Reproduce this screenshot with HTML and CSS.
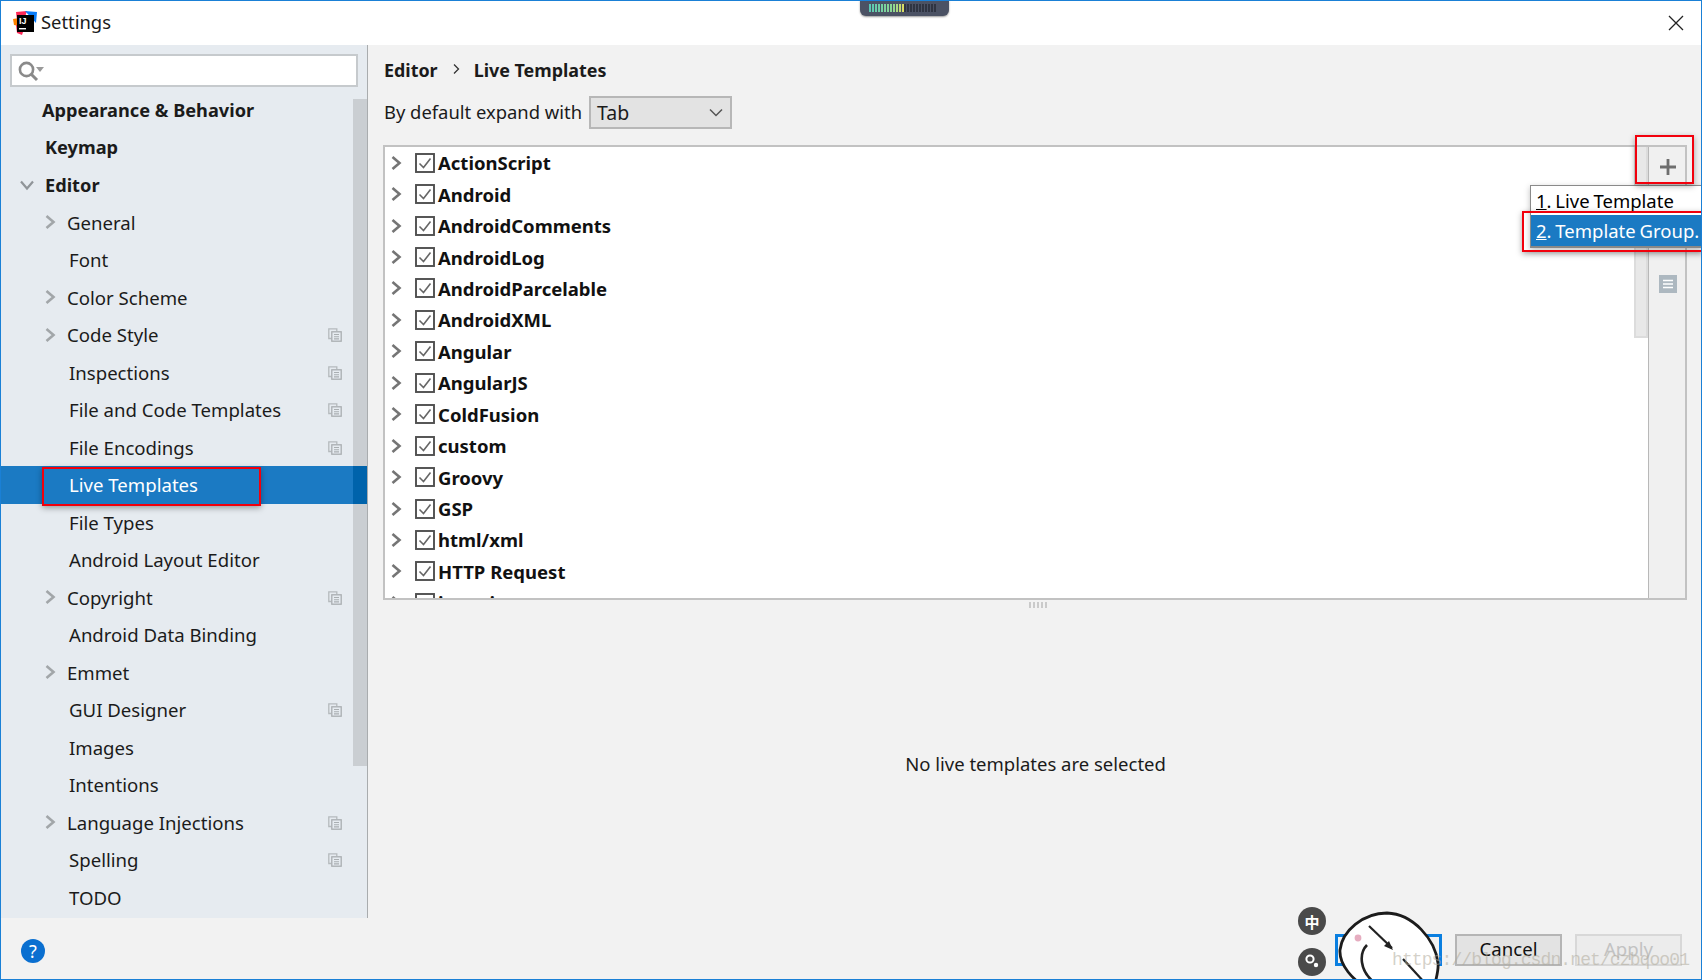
FILE: index.html
```html
<!DOCTYPE html>
<html lang="en">
<head>
<meta charset="utf-8">
<title>Settings</title>
<link rel="stylesheet" href="styles.css">
</head>
<body>
<svg class="defs" width="0" height="0" aria-hidden="true">
  <defs>
    <symbol id="chev" viewBox="0 0 12 16"><path d="M2.5 2 L9.5 8 L2.5 14" fill="none" stroke="currentColor" stroke-width="2.6"/></symbol>
    <symbol id="copy" viewBox="0 0 14 14"><path d="M3.5 10.5H.8V.8h8v2.4" fill="none" stroke="#b5babd" stroke-width="1.3"/><rect x="3.8" y="3.8" width="9.4" height="9.4" fill="#e6ebf0" stroke="#a9aeb1" stroke-width="1.3"/><path d="M6 6.5h5M6 8.7h5M6 10.9h5" stroke="#a9aeb1" stroke-width="1.1"/></symbol>
    <symbol id="chk" viewBox="0 0 20 20"><rect x="1" y="1" width="18" height="18" fill="#fff" stroke="#4f4f4f" stroke-width="1.9"/><path d="M4.5 10.5 L8.5 14.5 L15.5 5.5" fill="none" stroke="#666" stroke-width="1.6"/></symbol>
  </defs>
</svg>
<div class="window">
  <header class="titlebar">
    <svg class="logo" viewBox="0 0 24 24" width="24" height="24" aria-hidden="true">
      <path d="M3 1 L14 0 L10 12 L4 10Z" fill="#fe2857"/><path d="M12 0 L24 1 L23 12Z" fill="#087cfa"/><path d="M0 8 L6 7 L6 15 L1 14Z" fill="#ff8100"/><path d="M3 14 L12 15 L9 24 L4 22Z" fill="#fe2857"/>
      <rect x="4" y="4" width="17" height="17" fill="#000"/>
      <rect x="6" y="17" width="7" height="1.4" fill="#fff"/>
      <text x="6" y="13" class="logo-text">IJ</text>
    </svg>
    <span class="title">Settings</span>
    <svg class="close" viewBox="0 0 16 16" width="16" height="16" aria-hidden="true"><path d="M1 1L15 15M15 1L1 15" stroke="#222" stroke-width="1.3"/></svg>
  </header>
  <div class="body">
    <aside class="sidebar">
      <div class="search">
        <svg viewBox="0 0 28 22" width="28" height="22" aria-hidden="true"><circle cx="8.5" cy="9.5" r="6.6" fill="none" stroke="#8a8a8a" stroke-width="2.6"/><path d="M13 14L19 20" stroke="#8a8a8a" stroke-width="3"/><path d="M18 7h8l-4 5z" fill="#9a9a9a"/></svg>
      </div>
      <ul class="tree">
        <li class="row top-a">Appearance &amp; Behavior</li>
        <li class="row top">Keymap</li>
        <li class="row top open"><svg class="arrow-down" viewBox="0 0 16 12" width="16" height="12" aria-hidden="true"><path d="M2 2.5L8 9.5L14 2.5" fill="none" stroke="#909599" stroke-width="2.2"/></svg>Editor</li>
        <li class="row branch"><svg class="chev"><use href="#chev"/></svg>General</li>
        <li class="row leaf">Font</li>
        <li class="row branch"><svg class="chev"><use href="#chev"/></svg>Color Scheme</li>
        <li class="row branch"><svg class="chev"><use href="#chev"/></svg>Code Style<svg class="copy"><use href="#copy"/></svg></li>
        <li class="row leaf">Inspections<svg class="copy"><use href="#copy"/></svg></li>
        <li class="row leaf">File and Code Templates<svg class="copy"><use href="#copy"/></svg></li>
        <li class="row leaf">File Encodings<svg class="copy"><use href="#copy"/></svg></li>
        <li class="row leaf selected">Live Templates</li>
        <li class="row leaf">File Types</li>
        <li class="row leaf">Android Layout Editor</li>
        <li class="row branch"><svg class="chev"><use href="#chev"/></svg>Copyright<svg class="copy"><use href="#copy"/></svg></li>
        <li class="row leaf">Android Data Binding</li>
        <li class="row branch"><svg class="chev"><use href="#chev"/></svg>Emmet</li>
        <li class="row leaf">GUI Designer<svg class="copy"><use href="#copy"/></svg></li>
        <li class="row leaf">Images</li>
        <li class="row leaf">Intentions</li>
        <li class="row branch"><svg class="chev"><use href="#chev"/></svg>Language Injections<svg class="copy"><use href="#copy"/></svg></li>
        <li class="row leaf">Spelling<svg class="copy"><use href="#copy"/></svg></li>
        <li class="row leaf">TODO</li>
      </ul>
      <div class="side-thumb"></div>
    </aside>
    <main class="content">
      <div class="crumbs"><b>Editor</b><svg viewBox="0 0 8 12" width="8" height="12" aria-hidden="true"><path d="M2 1.5L6.5 6L2 10.5" fill="none" stroke="#333" stroke-width="1.3"/></svg><b>Live Templates</b></div>
      <div class="expand">
        <span class="expand-label">By default expand with</span>
        <div class="select"><span>Tab</span><svg viewBox="0 0 14 9" width="14" height="9" aria-hidden="true"><path d="M1 1.5L7 7.5L13 1.5" fill="none" stroke="#555" stroke-width="1.5"/></svg></div>
      </div>
      <section class="panel">
        <ul class="groups">
          <li><svg class="tchev"><use href="#chev"/></svg><svg class="chk"><use href="#chk"/></svg>ActionScript</li>
          <li><svg class="tchev"><use href="#chev"/></svg><svg class="chk"><use href="#chk"/></svg>Android</li>
          <li><svg class="tchev"><use href="#chev"/></svg><svg class="chk"><use href="#chk"/></svg>AndroidComments</li>
          <li><svg class="tchev"><use href="#chev"/></svg><svg class="chk"><use href="#chk"/></svg>AndroidLog</li>
          <li><svg class="tchev"><use href="#chev"/></svg><svg class="chk"><use href="#chk"/></svg>AndroidParcelable</li>
          <li><svg class="tchev"><use href="#chev"/></svg><svg class="chk"><use href="#chk"/></svg>AndroidXML</li>
          <li><svg class="tchev"><use href="#chev"/></svg><svg class="chk"><use href="#chk"/></svg>Angular</li>
          <li><svg class="tchev"><use href="#chev"/></svg><svg class="chk"><use href="#chk"/></svg>AngularJS</li>
          <li><svg class="tchev"><use href="#chev"/></svg><svg class="chk"><use href="#chk"/></svg>ColdFusion</li>
          <li><svg class="tchev"><use href="#chev"/></svg><svg class="chk"><use href="#chk"/></svg>custom</li>
          <li><svg class="tchev"><use href="#chev"/></svg><svg class="chk"><use href="#chk"/></svg>Groovy</li>
          <li><svg class="tchev"><use href="#chev"/></svg><svg class="chk"><use href="#chk"/></svg>GSP</li>
          <li><svg class="tchev"><use href="#chev"/></svg><svg class="chk"><use href="#chk"/></svg>html/xml</li>
          <li><svg class="tchev"><use href="#chev"/></svg><svg class="chk"><use href="#chk"/></svg>HTTP Request</li>
          <li><svg class="tchev"><use href="#chev"/></svg><svg class="chk"><use href="#chk"/></svg>iterations</li>
        </ul>
        <div class="vscroll"><div class="vthumb"></div></div>
        <div class="tools">
          <svg class="plus" viewBox="0 0 16 16" width="16" height="16" aria-hidden="true"><path d="M8 0V16M0 8H16" stroke="#6e6e6e" stroke-width="2.8"/></svg>
          <span class="tool-hidden"></span>
          <svg class="list" viewBox="0 0 18 18" width="18" height="18" aria-hidden="true"><rect width="18" height="18" fill="#adb8c0"/><path d="M4 5.5h10M4 9h10M4 12.5h10" stroke="#fff" stroke-width="1.4"/></svg>
        </div>
      </section>
      <div class="splitter"></div>
      <div class="detail">No live templates are selected</div>
    </main>
  </div>
  <footer class="footer">
    <svg class="help" viewBox="0 0 24 24" width="24" height="24" aria-hidden="true"><circle cx="12" cy="12" r="12" fill="#0a6fd0"/><text x="12" y="18.5" class="help-text">?</text></svg>
    <div class="buttons">
      <button class="btn ok" type="button">OK</button>
      <button class="btn cancel" type="button">Cancel</button>
      <button class="btn apply" type="button">Apply</button>
    </div>
  </footer>

  <div class="widget"><i class="lit"></i><i class="dark"></i></div>

  <div class="popup">
    <div class="pop-item"><u>1</u>. Live Template</div>
    <div class="pop-item active"><u>2</u>. Template Group.</div>
  </div>

  <div class="mark mark-plus"></div>
  <div class="mark mark-group"></div>
  <div class="mark mark-live"></div>

  <span class="ime ime-a">中</span>
  <svg class="ime-b" viewBox="0 0 28 28" width="28" height="28" aria-hidden="true"><circle cx="14" cy="14" r="14" fill="#4a4a4a"/><circle cx="12" cy="11" r="3.6" fill="none" stroke="#fff" stroke-width="2"/><circle cx="18" cy="17" r="2.2" fill="#fff"/></svg>

  <svg class="sticker" viewBox="0 0 110 80" width="110" height="80" aria-hidden="true">
    <path d="M7 39 C9 20 30 2 54 2 C80 3 102 28 105 52 C106 60 103 68 100 80 L36 80 C20 68 6 55 7 39Z" fill="#fff" stroke="#1c1c1c" stroke-width="2.8"/>
    <circle cx="25" cy="27" r="3.4" fill="#e6adc0"/>
    <path d="M36 15L59 37" stroke="#222" stroke-width="2.2"/>
    <path d="M51 35l9 4-4-9z" fill="#222"/>
    <path d="M70 48L92 72" stroke="#222" stroke-width="2.2"/>
    <path d="M34 34 C26 42 26 60 42 72" fill="none" stroke="#222" stroke-width="2.6"/>
  </svg>
  <span class="watermark">https://blog.csdn.net/czbqoo01</span>
</div>
</body>
</html>
```
FILE: styles.css
```css
* { box-sizing: border-box; }
html, body { margin: 0; padding: 0; }
body { font-family: "Noto Sans", "Noto Sans CJK SC", sans-serif; color: #1b1b1b; overflow: hidden; }
ul { list-style: none; margin: 0; padding: 0; }
.defs { position: absolute; }

.window { position: relative; width: 1702px; height: 980px; border: 1px solid #1a80d6; display: flex; flex-direction: column; background: #f2f2f2; overflow: hidden; }

.titlebar { height: 44px; flex: none; background: #fff; display: flex; align-items: center; padding: 0 17px 0 12px; }
.logo { flex: none; }
.logo-text { font: 700 9px "Liberation Sans", sans-serif; fill: #fff; }
.title { margin-left: 4px; margin-bottom: 3px; font-size: 18.4px; }
.close { margin-left: auto; }

.body { flex: 1; display: flex; min-height: 0; }

.sidebar { position: relative; width: 367px; flex: none; background: #e6ebf0; border-right: 1px solid #a9acae; padding: 9px 0 0; }
.search { margin: 0 9px; height: 33px; width: 348px; background: #fff; border: 2px solid #c6cacd; display: flex; align-items: center; padding-left: 6px; }
.tree { margin-top: 4px; }
.row { position: relative; height: 37.5px; display: flex; align-items: center; font-size: 18.6px; white-space: nowrap; }
.top-a { padding-left: 41px; font-weight: 700; font-size: 18.2px; }
.top { padding-left: 44px; font-weight: 700; font-size: 18.2px; }
.open { padding-left: 18px; }
.arrow-down { margin-right: 10px; flex: none; }
.branch { padding-left: 43px; }
.leaf { padding-left: 68px; }
.chev { width: 12px; height: 16px; margin-right: 11px; color: #a2a6a9; flex: none; }
.copy { position: absolute; left: 327px; top: 12px; width: 14px; height: 14px; }
.selected { background: #1b7ac3; color: #fff; }
.selected::after { content: ""; position: absolute; z-index: 2; left: 352px; width: 14px; top: 0; bottom: 0; background: #0063ab; }
.side-thumb { position: absolute; left: 352px; top: 54px; width: 14px; height: 667px; background: rgba(0,0,0,.12); }

.content { flex: 1; min-width: 0; padding: 0 14px 0 16px; display: flex; flex-direction: column; position: relative; }
.crumbs { height: 50px; display: flex; align-items: center; gap: 14px; font-size: 17.9px; }
.crumbs svg { margin-top: -2px; }
.expand { height: 34px; display: flex; align-items: center; font-size: 18.4px; }
.expand-label { margin-top: -2px; }
.select { width: 143px; height: 33px; margin-left: 7px; background: #e3e3e3; border: 2px solid #b7b7b7; display: flex; align-items: center; justify-content: space-between; padding: 0 7px 0 6px; font-size: 19.5px; }

.panel { margin-top: 16px; height: 455px; margin-left: -1px; background: #fff; border: 2px solid #c2c2c2; display: flex; overflow: hidden; }
.groups { flex: 1; overflow: hidden; }
.groups li { height: 31.45px; display: flex; align-items: center; font-size: 18.5px; font-weight: 700; color: #111; }
.tchev { width: 12px; height: 16px; margin-left: 5px; margin-right: 13px; color: #757575; flex: none; }
.chk { width: 20px; height: 20px; margin-right: 3px; flex: none; }
.vscroll { width: 14px; flex: none; background: #fff; }
.vthumb { height: 191px; background: #e8e8e8; border: 2px solid #dcdcdc; border-top: 0; }
.tools { width: 37px; flex: none; background: #f0f0f0; border-left: 1px solid #b8b8b8; display: flex; flex-direction: column; align-items: center; padding: 12px 0 0 2px; }
.plus { flex: none; }
.tool-hidden { height: 100px; flex: none; }
.list { flex: none; }

.splitter { height: 6px; width: 20px; margin: 2px auto 0; background: repeating-linear-gradient(90deg, #b9b9b9 0 2px, transparent 2px 4px); opacity: .7; transform: translateX(3px); }
.detail { flex: 1; display: flex; align-items: center; justify-content: center; font-size: 18.5px; }

.footer { height: 61px; flex: none; background: #f2f2f2; display: flex; align-items: center; padding: 4px 19px 0 20px; }
.help-text { font: 400 18px "Noto Sans", sans-serif; fill: #fff; text-anchor: middle; }
.buttons { margin-left: auto; display: flex; gap: 13px; margin-top: -4px; padding-top: 2px; }
.btn { width: 107px; height: 32px; font: 18.6px "Noto Sans", sans-serif; color: #111; background: #e3e3e3; border: 2px solid #b5b5b5; padding: 0 0 2px; }
.ok { background: #f2f2f2; border: 3px solid #0a7fe0; }
.apply { background: #ececec; border-color: #d8d8d8; color: #c2c2c2; }

.widget { position: absolute; left: 859px; top: -1px; width: 89px; height: 16px; background: #4b5264; border-radius: 0 0 6px 6px; display: flex; padding: 4px 9px; box-shadow: 0 1px 2px rgba(0,0,0,.4); }
.lit { width: 35px; height: 8px; background: repeating-linear-gradient(90deg, transparent 0 2px, #4b5264 2px 3px), linear-gradient(90deg, #58c8b4, #8fd890 70%, #e0dc60); }
.dark { width: 33px; height: 8px; background: repeating-linear-gradient(90deg, #2f3442 0 2px, #4b5264 2px 3px); }

.popup { position: absolute; left: 1529px; top: 184px; width: 172px; height: 63px; background: #fff; border: 1px solid #8a8a8a; border-right: 0; box-shadow: 0 2px 6px rgba(0,0,0,.25); font-size: 18.5px; word-spacing: -1px; }
.pop-item { height: 29px; display: flex; align-items: center; padding-left: 5px; white-space: pre; color: #000; }
.active { height: 33px; background: #1b7ac3; color: #fff; border-bottom: 2px solid #888; }

.mark { position: absolute; border: 2px solid #f2000c; box-shadow: 0 2px 6px rgba(0,0,0,.35); }
.mark-plus { left: 1634px; top: 134px; width: 59px; height: 49px; }
.mark-group { left: 1521px; top: 210px; width: 181px; height: 41px; border-right: 0; }
.mark-live { left: 41px; top: 466px; width: 219px; height: 39px; }

.ime { position: absolute; left: 1297px; top: 906px; width: 28px; height: 28px; border-radius: 50%; background: #4a4a4a; color: #fff; font: 700 15px "Noto Sans CJK SC", sans-serif; display: flex; align-items: center; justify-content: center; }
.ime-b { position: absolute; left: 1297px; top: 947px; }
.sticker { position: absolute; left: 1332px; top: 910px; }
.watermark { position: absolute; left: 1391px; top: 949px; font: 18px "Liberation Mono", monospace; letter-spacing: -0.9px; color: rgba(175,170,155,.55); white-space: nowrap; }
```
